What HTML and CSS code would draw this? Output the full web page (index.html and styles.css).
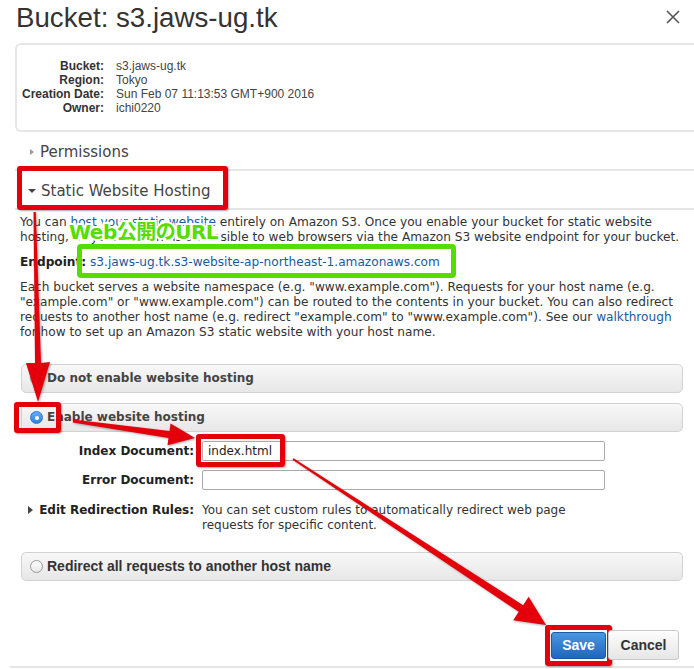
FILE: index.html
```html
<!DOCTYPE html>
<html lang="en">
<head>
    <meta charset="UTF-8">
    <title>Bucket: s3.jaws-ug.tk</title>
    <link rel="stylesheet" href="styles.css">
</head>
<body>
<div class="page">
    <div class="title-bar">
        <h1>Bucket: s3.jaws-ug.tk</h1>
        <span class="close">
            <svg width="14" height="14" viewBox="0 0 14 14"><path d="M1 1 L13 13 M13 1 L1 13" stroke="#555" stroke-width="1.6" fill="none"/></svg>
        </span>
    </div>

    <div class="props">
        <div class="prop-label">Bucket:</div><div>s3.jaws-ug.tk</div>
        <div class="prop-label">Region:</div><div>Tokyo</div>
        <div class="prop-label">Creation Date:</div><div>Sun Feb 07 11:13:53 GMT+900 2016</div>
        <div class="prop-label">Owner:</div><div>ichi0220</div>
    </div>

    <div class="section-head"><span class="caret caret-right"></span>Permissions</div>
    <div class="section-head open"><span class="caret caret-down"></span>Static Website Hosting<span class="red-box mark-head"></span></div>

    <div class="hosting">
        <p class="intro">You can <a href="#">host your static website</a> entirely on Amazon S3. Once you enable your bucket for static website<br>hosting, all your content is accessible to web browsers via the Amazon S3 website endpoint for your bucket.<span class="callout">Web公開のURL</span></p>
        <p class="endpoint"><b>Endpoint:</b> <a href="#">s3.jaws-ug.tk.s3-website-ap-northeast-1.amazonaws.com</a><span class="green-box"></span></p>
        <p class="namespace">Each bucket serves a website namespace (e.g. "www.example.com"). Requests for your host name (e.g.<br>"example.com" or "www.example.com") can be routed to the contents in your bucket. You can also redirect<br>requests to another host name (e.g. redirect "example.com" to "www.example.com"). See our <a href="#">walkthrough</a><br>for how to set up an Amazon S3 static website with your host name.</p>

        <div class="option first"><span class="radio"></span>Do not enable website hosting</div>
        <div class="option"><span class="radio checked"></span>Enable website hosting<span class="red-box mark-radio"></span></div>

        <div class="config">
            <label class="cfg-label">Index Document:</label>
            <div class="cfg-field"><input type="text" value="index.html"><span class="red-box mark-index"></span></div>
            <label class="cfg-label">Error Document:</label>
            <div class="cfg-field"><input type="text" value=""></div>
            <div class="cfg-label rules"><span class="caret caret-right dark"></span>Edit Redirection Rules:</div>
            <div class="cfg-note">You can set custom rules to automatically redirect web page<br>requests for specific content.</div>
        </div>

        <div class="option redirect"><span class="radio"></span>Redirect all requests to another host name</div>

        <div class="actions">
            <button class="btn btn-save">Save<span class="red-box mark-save"></span></button>
            <button class="btn btn-cancel">Cancel</button>
        </div>
    </div>
    <div class="bottom-rule"></div>

    <svg class="arrows" width="694" height="669" viewBox="0 0 694 669">
        <polygon points="33.5,212 35.8,212 41,363 50,362 38,402 26,363 35,363"/>
        <polygon points="73.2,419.5 169.5,430.9 170.5,423.5 195,438 167.5,445.3 168.5,437.9 72.8,422.5"/>
        <polygon points="293.5,458.2 523.1,605.2 528.6,596.8 546,625 513.2,620.2 518.7,611.8 292.5,459.8"/>
    </svg>
</div>
</body>
</html>
```

FILE: styles.css
```css
/* Base */
body {
    margin: 0;
    padding: 0;
    background-color: #fff;
    color: #333;
    font-family: "DejaVu Sans", Verdana, sans-serif;
}
.page {
    position: relative;
    width: 694px;
    height: 669px;
    overflow: hidden;
}
a {
    color: #1a5a9e;
    text-decoration: none;
}
p {
    margin: 0;
}

/* Title */
.title-bar {
    display: flex;
    justify-content: space-between;
    height: 43px;
    padding: 0 14px 0 16px;
    box-sizing: border-box;
}
.title-bar h1 {
    margin: 0;
    font-family: "Liberation Sans", Arial, sans-serif;
    font-weight: normal;
    font-size: 27.7px;
    line-height: 36px;
    color: #333;
}
.close {
    padding-top: 9px;
}

/* Properties box */
.props {
    margin-left: 15px;
    border: 2px solid #e6e6e6;
    border-right: 0;
    border-radius: 6px 0 0 6px;
    padding: 14px 0 15px;
    display: grid;
    grid-template-columns: 87px 1fr;
    column-gap: 12px;
    font-family: "Liberation Sans", Arial, sans-serif;
    font-size: 12px;
    line-height: 14px;
    color: #444;
}
.prop-label {
    text-align: right;
    font-weight: bold;
    color: #333;
}

/* Collapsible section headers */
.section-head {
    position: relative;
    display: flex;
    align-items: center;
    height: 34px;
    margin-left: 15px;
    padding: 3px 0 0 15px;
    border-bottom: 2px solid #e6e6e6;
    font-size: 15px;
    color: #444;
}
.section-head.open {
    height: 35px;
    padding-top: 2px;
}
.caret {
    display: inline-block;
    width: 0;
    height: 0;
}
.caret-right {
    border-top: 3.5px solid transparent;
    border-bottom: 3.5px solid transparent;
    border-left: 4px solid #999;
    margin-right: 6px;
}
.caret-right.dark {
    border-top-width: 4px;
    border-bottom-width: 4px;
    border-left: 5px solid #444;
    margin-right: 6px;
}
.caret-down {
    border-left: 4px solid transparent;
    border-right: 4px solid transparent;
    border-top: 4px solid #444;
    margin: 0 5px 0 -2px;
}

/* Annotation marks */
.red-box {
    position: absolute;
    border: 5px solid #e3000b;
    border-radius: 3px;
    box-sizing: border-box;
    box-shadow: 1px 1px 2px rgba(0, 0, 0, 0.35);
    pointer-events: none;
}
.mark-head {
    left: 2px;
    top: -5px;
    width: 211px;
    height: 44px;
}
.mark-radio {
    left: -8px;
    top: -2px;
    width: 47px;
    height: 31px;
}
.mark-index {
    left: -6px;
    top: -7px;
    width: 89px;
    height: 33px;
}
.mark-save {
    left: -7px;
    top: -8px;
    width: 67px;
    height: 41px;
}
.green-box {
    position: absolute;
    left: 57px;
    top: -11px;
    width: 379px;
    height: 34px;
    border: 5px solid #55dd00;
    border-radius: 4px;
    box-sizing: border-box;
}
.callout {
    position: absolute;
    left: 49px;
    top: 5px;
    font-size: 20px;
    font-weight: bold;
    line-height: 24px;
    color: #55dd00;
    -webkit-text-stroke: 4px #fff;
    paint-order: stroke fill;
    font-family: "DejaVu Sans", "Noto Sans CJK JP", sans-serif;
    letter-spacing: -0.5px;
}

/* Static website hosting body */
.hosting {
    padding-left: 20px;
    font-size: 12.15px;
    line-height: 15px;
}
.intro, .endpoint {
    position: relative;
    white-space: nowrap;
}
.intro {
    margin-top: 5px;
}
.endpoint {
    margin-top: 10px;
}
.endpoint b {
    color: #222;
}
.namespace {
    margin-top: 10px;
    white-space: nowrap;
}

/* Radio option bars */
.option {
    position: relative;
    display: flex;
    align-items: center;
    height: 29px;
    box-sizing: border-box;
    margin: 10px 11px 0 1px;
    padding-left: 8px;
    border: 1px solid #d2d2d2;
    border-radius: 5px;
    background: linear-gradient(#f8f8f8, #e7e7e7);
    font-size: 12px;
    font-weight: bold;
    color: #444;
}
.option.first {
    margin-top: 24px;
}
.option.redirect {
    margin-top: 20px;
    font-family: "Liberation Sans", Arial, sans-serif;
    font-size: 14px;
    color: #333;
}
.radio {
    width: 13px;
    height: 13px;
    box-sizing: border-box;
    border: 1px solid #999;
    border-radius: 50%;
    background: linear-gradient(#fff, #e8e8e8);
    margin-right: 4px;
    position: relative;
    flex-shrink: 0;
}
.radio.checked {
    border-color: #2d74cc;
    background: linear-gradient(#62adf5, #2f82e4);
}
.radio.checked::after {
    content: "";
    position: absolute;
    left: 3.5px;
    top: 3.5px;
    width: 4px;
    height: 4px;
    border-radius: 50%;
    background: #fff;
}

/* Hosting configuration form */
.config {
    display: grid;
    grid-template-columns: 174px 403px;
    column-gap: 8px;
    row-gap: 9px;
    margin-top: 9px;
    font-size: 12px;
}
.cfg-label {
    display: flex;
    justify-content: flex-end;
    align-items: center;
    font-weight: bold;
    color: #222;
}
.cfg-field {
    position: relative;
}
.cfg-field input {
    display: block;
    width: 100%;
    height: 20px;
    box-sizing: border-box;
    margin: 0;
    padding: 0 5px;
    border: 1px solid #aaa;
    border-radius: 2px;
    font-family: "DejaVu Sans", Verdana, sans-serif;
    font-size: 12px;
    color: #222;
}
.cfg-label.rules {
    align-items: flex-start;
    margin-top: 4px;
    line-height: 14px;
}
.cfg-label.rules .caret {
    margin-top: 3px;
}
.cfg-note {
    margin-top: 4px;
    line-height: 14.5px;
}

/* Buttons */
.actions {
    display: flex;
    justify-content: flex-end;
    align-items: center;
    gap: 2px;
    margin: 49px 15px 0 0;
}
.btn {
    position: relative;
    font-family: "Liberation Sans", Arial, sans-serif;
    font-weight: bold;
    font-size: 14px;
    border-radius: 3px;
    padding: 0;
}
.btn-save {
    width: 55px;
    height: 27px;
    color: #fff;
    border: 1px solid #1b5aa6;
    background: linear-gradient(#4b97e0, #1f66bd);
}
.btn-cancel {
    width: 71px;
    height: 30px;
    color: #333;
    border: 1px solid #c8c8c8;
    background: linear-gradient(#fdfdfd, #e6e6e6);
}
.bottom-rule {
    margin: 6px 0 0 10px;
    border-top: 2px solid #e6e6e6;
}

/* Red arrows drawn over the form */
.arrows {
    position: absolute;
    left: 0;
    top: 0;
    pointer-events: none;
    fill: #e3000b;
    filter: drop-shadow(1px 1px 1px rgba(0, 0, 0, 0.35));
}
```
